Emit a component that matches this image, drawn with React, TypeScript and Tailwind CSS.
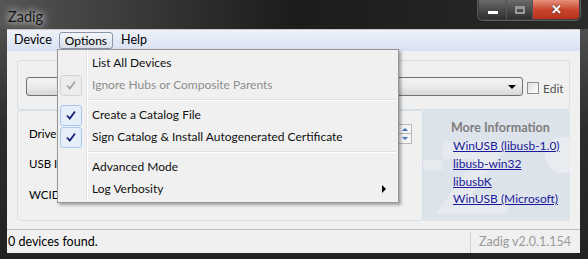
import React from "react";

const Check = ({ color }: { color: string }) => (
  <svg width="12" height="12" viewBox="0 0 12 12">
    <path d="M2 6.5 L4.8 9.5 L10 2.5" fill="none" stroke={color} strokeWidth="1.8" />
  </svg>
);

const MenuRow = ({
  label,
  check,
  disabled,
  arrow,
}: {
  label: string;
  check?: "on" | "off";
  disabled?: boolean;
  arrow?: boolean;
}) => (
  <div className="flex h-[22px] items-center">
    <div className="flex w-[29px] shrink-0 items-center pl-[2px]">
      {check && (
        <div
          className={
            check === "on"
              ? "flex h-[21px] w-[22px] items-center justify-center rounded-[3px] border border-[#a8c8f0] bg-[#e6eefa]"
              : "flex h-[21px] w-[22px] items-center justify-center rounded-[3px] border border-[#d4d4d4] bg-[#ececec]"
          }
        >
          <Check color={check === "on" ? "#14207a" : "#a6a6a6"} />
        </div>
      )}
    </div>
    <span
      className={
        disabled ? "pl-[5px] text-[#8d8d8d]" : "pl-[5px] text-[#111]"
      }
    >
      {label}
    </span>
    {arrow && (
      <span className="ml-auto mr-[12px] h-0 w-0 border-y-[4px] border-l-[4px] border-y-transparent border-l-black" />
    )}
  </div>
);

const Separator = () => (
  <div className="flex h-[8px] items-center pl-[30px] pr-[2px]">
    <div className="h-[2px] w-full border-t border-b border-t-[#e0e0e0] border-b-white" />
  </div>
);

const OptionsMenu = () => (
  <div className="absolute left-[57px] top-[49px] z-10 w-[342px] border border-[#979797] bg-[#f0f0f0] pb-[2px] pt-[2px] shadow-[2px_2px_3px_rgba(0,0,0,0.35)]">
    <div className="absolute bottom-0 left-[28px] top-0 w-[2px] border-l border-r border-l-[#e2e3e3] border-r-white" />
    <div className="relative">
      <MenuRow label="List All Devices" />
      <MenuRow label="Ignore Hubs or Composite Parents" check="off" disabled />
      <Separator />
      <MenuRow label="Create a Catalog File" check="on" />
      <MenuRow label="Sign Catalog & Install Autogenerated Certificate" check="on" />
      <Separator />
      <MenuRow label="Advanced Mode" />
      <MenuRow label="Log Verbosity" arrow />
    </div>
  </div>
);

const CaptionButtons = () => (
  <div className="flex h-[20px] overflow-hidden rounded-b-[5px] border border-t-0 border-[#3d3d3d] shadow-[0_0_0_1px_rgba(255,255,255,0.25)]">
    <div className="flex w-[28px] items-center justify-center border-r border-[#555] bg-gradient-to-b from-[#6b6b6b] to-[#2f2f2f]">
      <div className="mt-[5px] h-[3px] w-[10px] bg-white" />
    </div>
    <div className="flex w-[26px] items-center justify-center border-r border-[#555] bg-gradient-to-b from-[#6b6b6b] to-[#2f2f2f]">
      <div className="h-[8px] w-[10px] border-2 border-[#9a9a9a] border-t-[3px]" />
    </div>
    <div className="flex w-[46px] items-center justify-center bg-gradient-to-b from-[#e6907c] via-[#c9462c] to-[#b8321a]">
      <span className="text-[13px] font-bold leading-none text-white [text-shadow:0_0_2px_#333]">✕</span>
    </div>
  </div>
);

export default function App() {
  return (
    <div className="relative flex h-[259px] w-[588px] flex-col bg-gradient-to-b from-[#585858] via-[#2c2c2c] to-[#222] font-['Lato',sans-serif] text-[12px] text-black">
      {/* title bar */}
      <div className="flex h-[29px] items-start bg-gradient-to-r from-[#555] via-[#1c1c1c] to-[#2a2a2a] pr-[8px]">
        <span className="mt-[6px] pl-[8px] text-[14.5px] text-[#141414] [text-shadow:0_0_6px_#ddd,0_0_10px_#ccc]">
          Zadig
        </span>
        <div className="ml-auto">
          <CaptionButtons />
        </div>
      </div>

      {/* client */}
      <div className="mx-[7px] mr-[8px] flex flex-1 flex-col border-t border-[#c8c8c8] bg-[#f0f0f0]">
        {/* menubar */}
        <div className="flex h-[21px] items-center bg-gradient-to-b from-[#eef2fb] to-[#d8e0f1] text-[12.5px]">
          <span className="px-[7px]">Device</span>
          <span className="rounded-[3px] border border-[#8795ae] bg-gradient-to-b from-[#f4f6fa] to-[#d9dfea] px-[5px] text-[12px] leading-[15px]">
            Options
          </span>
          <span className="px-[8px]">Help</span>
        </div>

        {/* body */}
        <div className="flex flex-col px-[10px] pt-[9px]">
          <div className="flex h-[50px] items-start rounded-[3px] border border-[#d5dfe5] pl-[8px] pt-[16px]">
            <div className="relative h-[19px] w-[497px] rounded-[3px] border border-[#707070] bg-gradient-to-b from-[#f3f3f3] via-[#ebebeb] to-[#d6d6d6]">
              <span className="absolute right-[6px] top-[7px] h-0 w-0 border-x-[4px] border-t-[4px] border-x-transparent border-t-black" />
            </div>
            <div className="ml-[4px] mt-[5px] h-[12px] w-[12px] border border-[#8f8f8f] bg-gradient-to-br from-[#e0e0e0] to-white" />
            <span className="ml-[4px] mt-[3px] text-[#555]">Edit</span>
          </div>
          <div className="flex h-[111px]">
            <div className="relative flex flex-1 flex-col rounded-[3px] border border-[#d5dfe5] pl-[11px] text-[11.5px]">
              <span className="mt-[14px]">Driver</span>
              <span className="mt-[13px]">USB ID</span>
              <span className="mt-[13px]">WCID</span>
              <div className="absolute right-[10px] top-[13px] flex flex-col">
                <div className="flex h-[10px] w-[14px] items-center justify-center border border-[#b9b9b9] bg-[#f4f4f4]">
                  <span className="h-0 w-0 border-x-[3px] border-b-[3px] border-x-transparent border-b-[#4a6fbf]" />
                </div>
                <div className="flex h-[10px] w-[14px] items-center justify-center border border-t-0 border-[#b9b9b9] bg-[#f4f4f4]">
                  <span className="h-0 w-0 border-x-[3px] border-t-[3px] border-x-transparent border-t-[#4a6fbf]" />
                </div>
              </div>
            </div>
            <div className="relative flex w-[147px] flex-col overflow-hidden bg-[#dde3ea] pl-[30px] pt-[9px]">
              <svg className="absolute left-0 top-0" width="147" height="111" viewBox="0 0 147 111">
                <path d="M20 40 L70 40 L30 95 L85 95" fill="none" stroke="#e6eaef" strokeWidth="18" />
                <circle cx="140" cy="45" r="18" fill="#e8ecf1" />
                <path d="M0 55 L20 55" stroke="#e6eaef" strokeWidth="10" />
              </svg>
              <span className="relative ml-[-2px] text-[12.5px] font-bold leading-[18px] text-[#7d7d7d]">
                More Information
              </span>
              <a className="relative leading-[18px] text-[#1a1a9a] underline">WinUSB (libusb-1.0)</a>
              <a className="relative leading-[18px] text-[#1a1a9a] underline">libusb-win32</a>
              <a className="relative leading-[18px] text-[#1a1a9a] underline">libusbK</a>
              <a className="relative leading-[16px] text-[#1a1a9a] underline">WinUSB (Microsoft)</a>
            </div>
          </div>
        </div>

        {/* status bar */}
        <div className="mt-auto flex h-[24px] items-center border-t border-[#bcbcbc] pt-[2px] text-[12.5px]">
          <span className="flex-1 pl-[1px]">0 devices found.</span>
          <div className="flex h-full w-[110px] items-center border-l border-[#d0d0d0] pl-[8px] text-[#9a9a9a]">
            Zadig v2.0.1.154
          </div>
        </div>
      </div>
      <div className="h-[6px]" />

      <OptionsMenu />
    </div>
  );
}
